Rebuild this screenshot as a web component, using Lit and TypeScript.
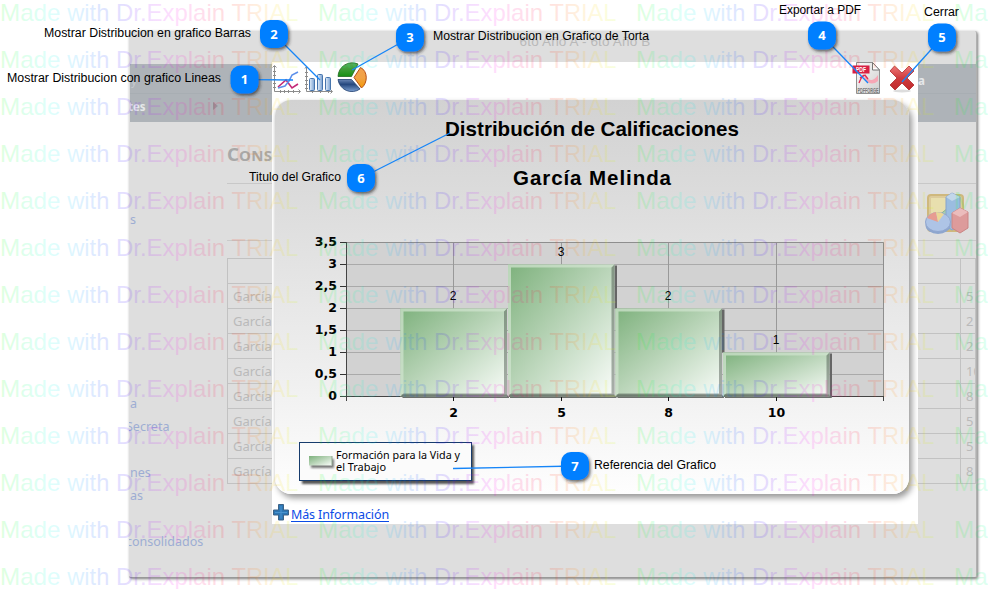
import { LitElement, html, svg, css } from "lit";
import { customElement } from "lit/decorators.js";

/* ---------- Dimmed application page behind the dialog ---------- */
const ROWS = ["5", "2", "2", "10", "8", "5", "5", "8"];

@customElement("school-page")
class SchoolPage extends LitElement {
  static styles = css`
    :host { display: block; box-sizing: border-box; width: 848px; height: 547px; overflow: hidden;
      background: #dedede; color: #bababa; font: 13px "Noto Sans", "Open Sans", sans-serif;
      border-right: 1px solid #b0b0b0; border-bottom: 1px solid #999; box-shadow: 1px 1px 3px #777; border-radius: 2px; }
    .top { height: 33px; display: flex; justify-content: center; font: 13.5px/22px "Liberation Sans", sans-serif; color: #b9b9b9; letter-spacing: .15px; }
    .top span { margin-left: 65px; white-space: pre; }
    .nav { height: 58px; background: #aeb3b8; margin-left: 1px; color: #e6e8ea; font: bold 11.5px "Noto Sans", sans-serif; overflow: hidden; }
    .navrow { height: 29px; display: flex; align-items: center; justify-content: space-between; box-sizing: border-box; }
    .navrow + .navrow { border-top: 1px solid #a8aeb3; }
    .n1 { padding: 3px 51px 0 1px; }
    .n1 span:first-child { color: #c6cace; font-weight: normal; }
    .item { display: flex; width: 90px; margin-left: -2px; justify-content: space-between; align-items: center; padding-bottom: 4px; }
    .arrow { width: 0; height: 0; border: 4.5px solid transparent; border-left: 5px solid #94969b; border-right: 0; }
    .cols { display: flex; height: 454px; }
    .side { width: 98px; display: grid; grid-template-rows: 86px 184px 22.5px 46px 23px 46px; align-items: end; color: #9dadd3; font-size: 12.5px; line-height: 18px; white-space: nowrap; overflow: hidden; flex: none; margin-top: 21px; }
    .side span { display: flex; justify-content: flex-start; margin-left: 1px; }
    .side .cut { margin-left: -3px; }
    .side .cut2 { margin-left: -3px; }
    .main { flex: 1; min-width: 0; }
    .h { height: 62px; box-sizing: border-box; border-bottom: 1px solid #c8c8c8; padding-top: 20px; font: bold 18.5px/24px "Noto Sans", sans-serif; color: #a8a8a8; }
    .h small { font-size: 15px; letter-spacing: .4px; }
    .tool { height: 57px; box-sizing: border-box; border-bottom: 1px solid #cacaca; display: flex; justify-content: flex-end; padding: 7px 6px 0 0; }
    .table { margin-top: 17px; border: 1px solid #c2c2c2; border-bottom: 0; }
    .tr { height: 24px; border-bottom: 1px solid #c2c2c2; display: flex; justify-content: space-between; line-height: 25px; }
    .name { padding-left: 5px; }
    .val { width: 9px; padding-left: 5px; border-left: 1px solid #c2c2c2; overflow: hidden; font-size: 13px; }
  `;
  render() {
    return html`
      <div class="top"><span>6to Año A - 6to Año B</span></div>
      <div class="nav">
        <div class="navrow n1"><span>y</span><span>a</span></div>
        <div class="navrow"><div class="item"><span>tes</span><i class="arrow"></i></div></div>
      </div>
      <div class="cols">
        <div class="side">
          <span>s</span><span>a</span><span class="cut">Secreta</span><span>nes</span><span>as</span><span class="cut2">consolidados</span>
        </div>
        <div class="main">
          <div class="h">C<small>ONS</small></div>
          <div class="tool">
            <svg width="46" height="46" viewBox="0 0 46 46">
              <rect x="4" y="4" width="35" height="36" rx="3" fill="#dccb9c" stroke="#cfb87d" stroke-width="2"/>
              <rect x="7" y="7" width="29" height="27" fill="#e8dfae"/>
              <path d="M14 25l10-8 4 5v16H14z" fill="#a9cfae" stroke="#8bb38f"/>
              <path d="M22 6l6-4 8 4v29l-8 4-6-4z" fill="#9bbde0" stroke="#88a3cb"/><path d="M22 6l6 4 8-4-8-4z" fill="#c2d7ea"/>
              <path d="M28 22l8-5 8 4v16l-8 5-8-5z" fill="#dd9b9b" stroke="#cb8585"/><path d="M28 22l8 4 8-5-8-4z" fill="#ebbcbc"/>
              <ellipse cx="14" cy="34" rx="12.500" ry="9" fill="#8ea6ce"/><ellipse cx="14" cy="31" rx="12.500" ry="9.500" fill="#aec4e6" stroke="#90a6cf"/>
              <path d="M14 31L3 27q3-5 9-6z" fill="#e79c91"/><path d="M14 31L12 21q5 0 8 2z" fill="#ebd796"/>
            </svg>
          </div>
          <div class="table">
            <div class="tr"><span></span><span class="val"></span></div>
            ${ROWS.map(v => html`<div class="tr"><span class="name">García</span><span class="val">${v}</span></div>`)}
          </div>
        </div>
      </div>`;
  }
}

/* ---------- Histogram ---------- */
const BARS = [{ label: "2", n: 2 }, { label: "5", n: 3 }, { label: "8", n: 2 }, { label: "10", n: 1 }];
const PX = 71.5, PY = 142, PW = 537, UNIT = 44, BASE = 296, BW = 107.5;

@customElement("grade-chart")
class GradeChart extends LitElement {
  static styles = css`
    :host { display: block; width: 634px; height: 394px; border-radius: 16px; overflow: hidden;
      background: linear-gradient(#d2d2d2, #dcdcdc 25%, #f0f0f0 72%, #fefefe); }
    svg { display: block; }
    .title { font: bold 20.5px "Liberation Sans", Arial, sans-serif; }
    .axis { font: bold 12.5px "DejaVu Sans", Verdana, sans-serif; }
    .value { font: 12px "Liberation Sans", Arial, sans-serif; text-anchor: middle; }
    .mid { text-anchor: middle; }
    .end { text-anchor: end; }
    .leg { font: 11.5px "Noto Sans", "Open Sans", sans-serif; }
  `;
  private bar(b: { label: string; n: number }, i: number) {
    const x = 125.5 + i * BW, w = BW - 1, h = b.n * UNIT, y = BASE - h + .5, r = x + w, t = BASE + .5;
    const lower = i === 3 || BARS[i + 1].n < b.n;
    const sh = i === 3 ? h : lower ? (b.n - BARS[i + 1].n) * UNIT : 0;
    return svg`
      ${sh ? svg`<rect x=${r} y=${y + 1} width="2.500" height=${sh - (i === 3 ? 0 : 1)} fill="#666"/>` : ""}
      <rect x=${x + 2} y=${t - 1} width=${w} height="2.500" fill="#6c706c"/>
      <rect x=${x} y=${y} width=${w} height=${h} fill="url(#g)"/>
      <path d="M${x} ${t}V${y}H${r}L${r - 3} ${y + 3}H${x + 3}V${t - 3}Z" fill="#cfe3ce" fill-opacity=".75"/>
      <path d="M${r} ${y}V${t}H${x}L${x + 3} ${t - 3}H${r - 3}V${y + 3}Z" fill="#2f3a31" fill-opacity=".4"/>
      <path d="M${x + 1} ${t - 1}H${r}" stroke="#5f6b61" stroke-opacity=".6" stroke-width="2"/>`;
  }
  render() {
    const ticks = ["0", "0,5", "1", "1,5", "2", "2,5", "3", "3,5"];
    return html`<svg width="634" height="394" viewBox="0 0 634 394">
      <defs>
        <linearGradient id="g" x1="0" y1="0" x2="1" y2="1"><stop offset="0" stop-color="#7db17c"/><stop offset=".45" stop-color="#b5d2b4"/><stop offset="1" stop-color="#fafdfa"/></linearGradient>
        <filter id="s" x="-10%" y="-20%" width="125%" height="150%"><feGaussianBlur stdDeviation="1"/></filter>
      </defs>
      <text class="title" x="170" y="36" textLength="294" lengthAdjust="spacingAndGlyphs">Distribución de Calificaciones</text>
      <text class="title" x="238" y="85" textLength="158">García Melinda</text>
      <rect x=${PX} y=${PY} width=${PW} height="154" fill="#d2d2d2"/>
      ${ticks.map((s, i) => {
        const y = Math.round(BASE - i * 22) + .5;
        return svg`<path d="M${PX} ${y}H${PX + PW}" stroke="#aaaaaa"/>
          <path d="M65 ${y}h6" stroke="#333"/><text class="axis end" x="62" y=${y + 3.5}>${s}</text>`;
      })}
      ${BARS.map((_, i) => svg`<path d="M${Math.round(178 + i * 107.6) + .5} ${PY}V${BASE}" stroke="#999"/>`)}
      <path d="M71.500 142.500H608.500V296.500" fill="none" stroke="#8e8e8e"/>
      <path d="M71.500 142V301M65 296.500H608.500M608.500 296V301" fill="none" stroke="#444"/>
      ${BARS.map((b, i) => this.bar(b, i))}
      ${BARS.map((b, i) => {
        const x = Math.round(178 + i * 107.6) + .5;
        return svg`<path d="M${x} 297v4" stroke="#111"/><text class="axis mid" x=${x} y="317">${b.label}</text>
          <text class="value" x=${x - .5} y=${BASE - b.n * UNIT - 8.5}>${b.n}</text>`;
      })}
      <rect x="27" y="345" width="172" height="39" fill="#555" filter="url(#s)"/>
      <rect x="24.500" y="342.500" width="172" height="38" fill="#fbfbfb" stroke="#173c6d"/>
      <rect x="36" y="359" width="23" height="9" fill="#777" filter="url(#s)"/>
      <rect x="34" y="356" width="23" height="9.500" fill="url(#g)"/><path d="M57 356v9.500" stroke="#8fa58f"/>
      <text class="leg" x="61" y="359" textLength="124" lengthAdjust="spacingAndGlyphs">Formación para la Vida y</text>
      <text class="leg" x="61" y="371" textLength="50" lengthAdjust="spacingAndGlyphs">el Trabajo</text>
    </svg>`;
  }
}

/* ---------- Dialog ---------- */
@customElement("chart-dialog")
class ChartDialog extends LitElement {
  static styles = css`
    :host { display: flex; flex-direction: column; width: 646px; height: 462px; background: #fff; overflow: hidden; }
    .bar { height: 38px; display: flex; flex: none; }
    .bar svg { flex: none; }
    .gap { flex: 1; }
    grade-chart { margin-left: 3px; flex: none; box-shadow: 3px 4px 6px 0 #999, -1px 0 2px #eee; }
    .foot { flex: 1; display: flex; align-items: flex-start; gap: 2px; padding: 10px 0 0 1px; font: 12.5px/17px "Noto Sans", "Open Sans", sans-serif; }
    .foot a { color: #0b4be6; text-decoration: underline; text-underline-offset: 2px; letter-spacing: -.12px; line-height: 22px; }
  `;
  render() {
    return html`
      <div class="bar">
        <svg width="100" height="38" viewBox="272 62 100 38">
          <defs>
            <linearGradient id="b" x2="1"><stop stop-color="#e4effb"/><stop offset="1" stop-color="#779fd0"/></linearGradient>
            <linearGradient id="gr" x2="0" y2="1"><stop stop-color="#5da95a"/><stop offset=".55" stop-color="#379b31"/><stop offset="1" stop-color="#168f13"/></linearGradient>
            <linearGradient id="or" x2="0" y2="1"><stop stop-color="#f2a04c"/><stop offset=".5" stop-color="#f1a246"/><stop offset="1" stop-color="#f39a05"/></linearGradient>
            <linearGradient id="bl" x2="0" y2="1"><stop stop-color="#6985b4"/><stop offset=".4" stop-color="#25477e"/><stop offset="1" stop-color="#7da0d1"/></linearGradient>
          </defs>
          <g fill="none" stroke="#8c8c8c">
            <path d="M274.500 66V91.500H300M272.500 67.500l2-2 2 2M298.500 89.500l2 2-2 2M273 71.500h3M273 75.500h3M273 79.500h3M273 83.500h3M273 87.500h3M280.500 90v3M284.500 90v3M288.500 90v3M293.500 90v3"/>
            <path d="M306.500 67V91.500H332M305 68.500l1.500-2 2 2M330.500 89.500l2 2-2 2M305 72.500h3M305 76.500h3M305 80.500h3M305 84.500h3M305 88.500h3M312.500 90v3M320.500 90v3M328.500 90v3"/>
          </g>
          <path d="M278 87l8-7 6 8 6-4" fill="none" stroke="#c32a77" stroke-width="1.600"/>
          <path d="M278 88l7-2 4-5 3-6 6-3" fill="none" stroke="#5e90ea" stroke-width="1.600"/>
          <g fill="url(#b)" stroke="#4775ad"><rect x="309.500" y="78.500" width="5" height="12" rx="1"/><rect x="317.500" y="74.500" width="5" height="16" rx="1"/><rect x="325.500" y="77.500" width="5" height="13" rx="1"/></g>
          <path d="M338 76.500A14.200 14.200 0 0 1 358 64L351.500 76.500Z" fill="url(#gr)" stroke="#216a20" stroke-width=".8"/>
          <path d="M360.500 67.500C368 71 368 83 361.500 88L354 77.500Z" fill="url(#or)" stroke="#b64e13" stroke-width="1"/>
          <path d="M338 79.500H351.500L360 89A14 14 0 0 1 338 79.500Z" fill="url(#bl)" stroke="#1f3f70" stroke-width=".8"/>
        </svg>
        <div class="gap"></div>
        <svg width="70" height="38" viewBox="848 62 70 38">
          <defs>
            <linearGradient id="pg" x2="1" y2="1"><stop stop-color="#fafafa"/><stop offset="1" stop-color="#cfcfcf"/></linearGradient>
            <linearGradient id="rd" x2="0" y2="1"><stop stop-color="#ee7777"/><stop offset=".5" stop-color="#cf3c3e"/><stop offset="1" stop-color="#c02a2c"/></linearGradient>
          </defs>
          <path d="M856.500 62.500H872.500L879.500 70V93.500H856.500Z" fill="url(#pg)" stroke="#8f8f8f"/>
          <path d="M872.500 62.500V70H879.500Z" fill="#fff" stroke="#777"/>
          <path d="M865 75Q871 85 878 75V81Q871 87 864 79Z" fill="#f6a6b5"/>
          <path d="M859 83Q861 77 865 75l3 4M860 78l4-3" fill="none" stroke="#e62852" stroke-width="1.300"/>
          <rect x="852.500" y="65.500" width="17" height="8" fill="#d81f43"/>
          <text x="856" y="72" font-size="7" font-weight="bold" font-family="Liberation Sans, sans-serif" fill="#fff" textLength="10" lengthAdjust="spacingAndGlyphs">PDF</text>
          <text x="857.500" y="92.500" font-size="7.500" font-weight="bold" font-family="Liberation Sans, sans-serif" fill="#777" textLength="21" lengthAdjust="spacingAndGlyphs">PDFFORGE</text>
          <ellipse cx="902" cy="91" rx="9" ry="1.500" fill="#ddd"/>
          <path d="M894.500 66L902 73 909 66 914 71 907 78 914 85 909 90 902 83 895 90 890 85 897 78 890 71Z" fill="url(#rd)" stroke="#b02a2c" stroke-width=".8" stroke-linejoin="round"/>
        </svg>
      </div>
      <grade-chart></grade-chart>
      <div class="foot">
        <svg width="16" height="17" viewBox="0 0 16 17"><path d="M5.500 .500h5v5.500h5v5h-5v5h-5v-5h-5V6h5z" fill="#2c77b5" stroke="#3d6387"/><path d="M8 2v12.500M2 8.500h12" stroke="#4a94cf"/></svg>
        <a>Más Información</a>
      </div>`;
  }
}

/* ---------- Callouts: badge centre, target point and caption ---------- */
const NOTES = [
  { n: 1, x: 244.5, y: 79.5, tx: 293, ty: 80, text: "Mostrar Distribucion con grafico Lineas", lx: 7, ly: 82, w: 214 },
  { n: 2, x: 274, y: 34, tx: 320, ty: 80, text: "Mostrar Distribucion en grafico Barras", lx: 44, ly: 37, w: 207 },
  { n: 3, x: 410, y: 37.5, tx: 352, ty: 70, text: "Mostrar Distribucion en Grafico de Torta", lx: 433, ly: 40, w: 216 },
  { n: 4, x: 822, y: 35.5, tx: 868, ty: 83, text: "Exportar a PDF", lx: 779, ly: 14, w: 82 },
  { n: 5, x: 942, y: 37.5, tx: 902, ty: 82, text: "Cerrar", lx: 924, ly: 16, w: 35 },
  { n: 6, x: 361, y: 178, tx: 450, ty: 133, text: "Titulo del Grafico", lx: 249, ly: 181, w: 92 },
  { n: 7, x: 575, y: 466, tx: 453, ty: 468.5, text: "Referencia del Grafico", lx: 594, ly: 469, w: 122 },
];
/* Watermark words: offset inside one repeat and advance width */
const WORDS = [
  { t: "Made", x: 0, w: 60.5 },
  { t: "with", x: 67.3, w: 42 },
  { t: "Dr.Explain", x: 116, w: 109 },
  { t: "TRIAL", x: 231.5, w: 67 },
];
const STOPS = Array.from({ length: 13 }, (_, i) => i / 12);

@customElement("app-root")
class AppRoot extends LitElement {
  static styles = css`
    :host { display: block; position: relative; width: 988px; height: 589px; background: #fff; overflow: hidden; }
    school-page { margin: 31px 0 0 129px; }
    .dialog { position: absolute; left: 272px; top: 62px; }
    .over { position: absolute; inset: 0; pointer-events: none; }
    .wm { font: 24px "Liberation Sans", Arial, sans-serif; }
    .cap { font: 12px "Liberation Sans", Arial, sans-serif; fill: #000; }
    .num { font: bold 13px "Noto Sans", "Open Sans", sans-serif; fill: #fff; text-anchor: middle; }
  `;
  render() {
    const cols = [0, 1, 2, 3], rows = Array.from({ length: 13 }, (_, i) => i);
    return html`
      <school-page></school-page>
      <chart-dialog class="dialog"></chart-dialog>
      <svg class="over" width="988" height="589" viewBox="0 0 988 589">
        <defs>
          ${cols.map(c => svg`<linearGradient id=${"w" + c} gradientUnits="userSpaceOnUse" x1=${c * 318} x2=${c * 318 + 300} y1="0" y2="0">
            ${STOPS.map(s => svg`<stop offset=${s} stop-color=${`hsl(${(120 + s * 315) % 360},100%,50%)`}/>`)}
          </linearGradient>`)}
          <filter id="sh" x="-30%" y="-30%" width="170%" height="170%"><feDropShadow dx="1.500" dy="2" stdDeviation="1.500" flood-color="#222" flood-opacity=".65"/></filter>
        </defs>
        <g fill-opacity=".13">
          ${rows.map(r => cols.map(c => WORDS.filter(k => c * 318 + k.x < 988).map(k =>
            svg`<text class="wm" x=${c * 318 + k.x} y=${21 + r * 47} textLength=${k.w} lengthAdjust="spacingAndGlyphs" fill=${`url(#w${c})`}>${k.t}</text>`)))}
        </g>
        ${NOTES.map(a => svg`
          <path d="M${a.x} ${a.y}L${a.tx} ${a.ty}" stroke="#1685f8" stroke-width="1.300"/>
          <rect x=${a.x - 14} y=${a.y - 14} width="28" height="28" rx="10" fill="#007fff" filter="url(#sh)"/>
          <text class="num" x=${a.x} y=${a.y + 4.5}>${a.n}</text>
          <text class="cap" x=${a.lx} y=${a.ly} textLength=${a.w} lengthAdjust="spacingAndGlyphs">${a.text}</text>`)}
      </svg>`;
  }
}
